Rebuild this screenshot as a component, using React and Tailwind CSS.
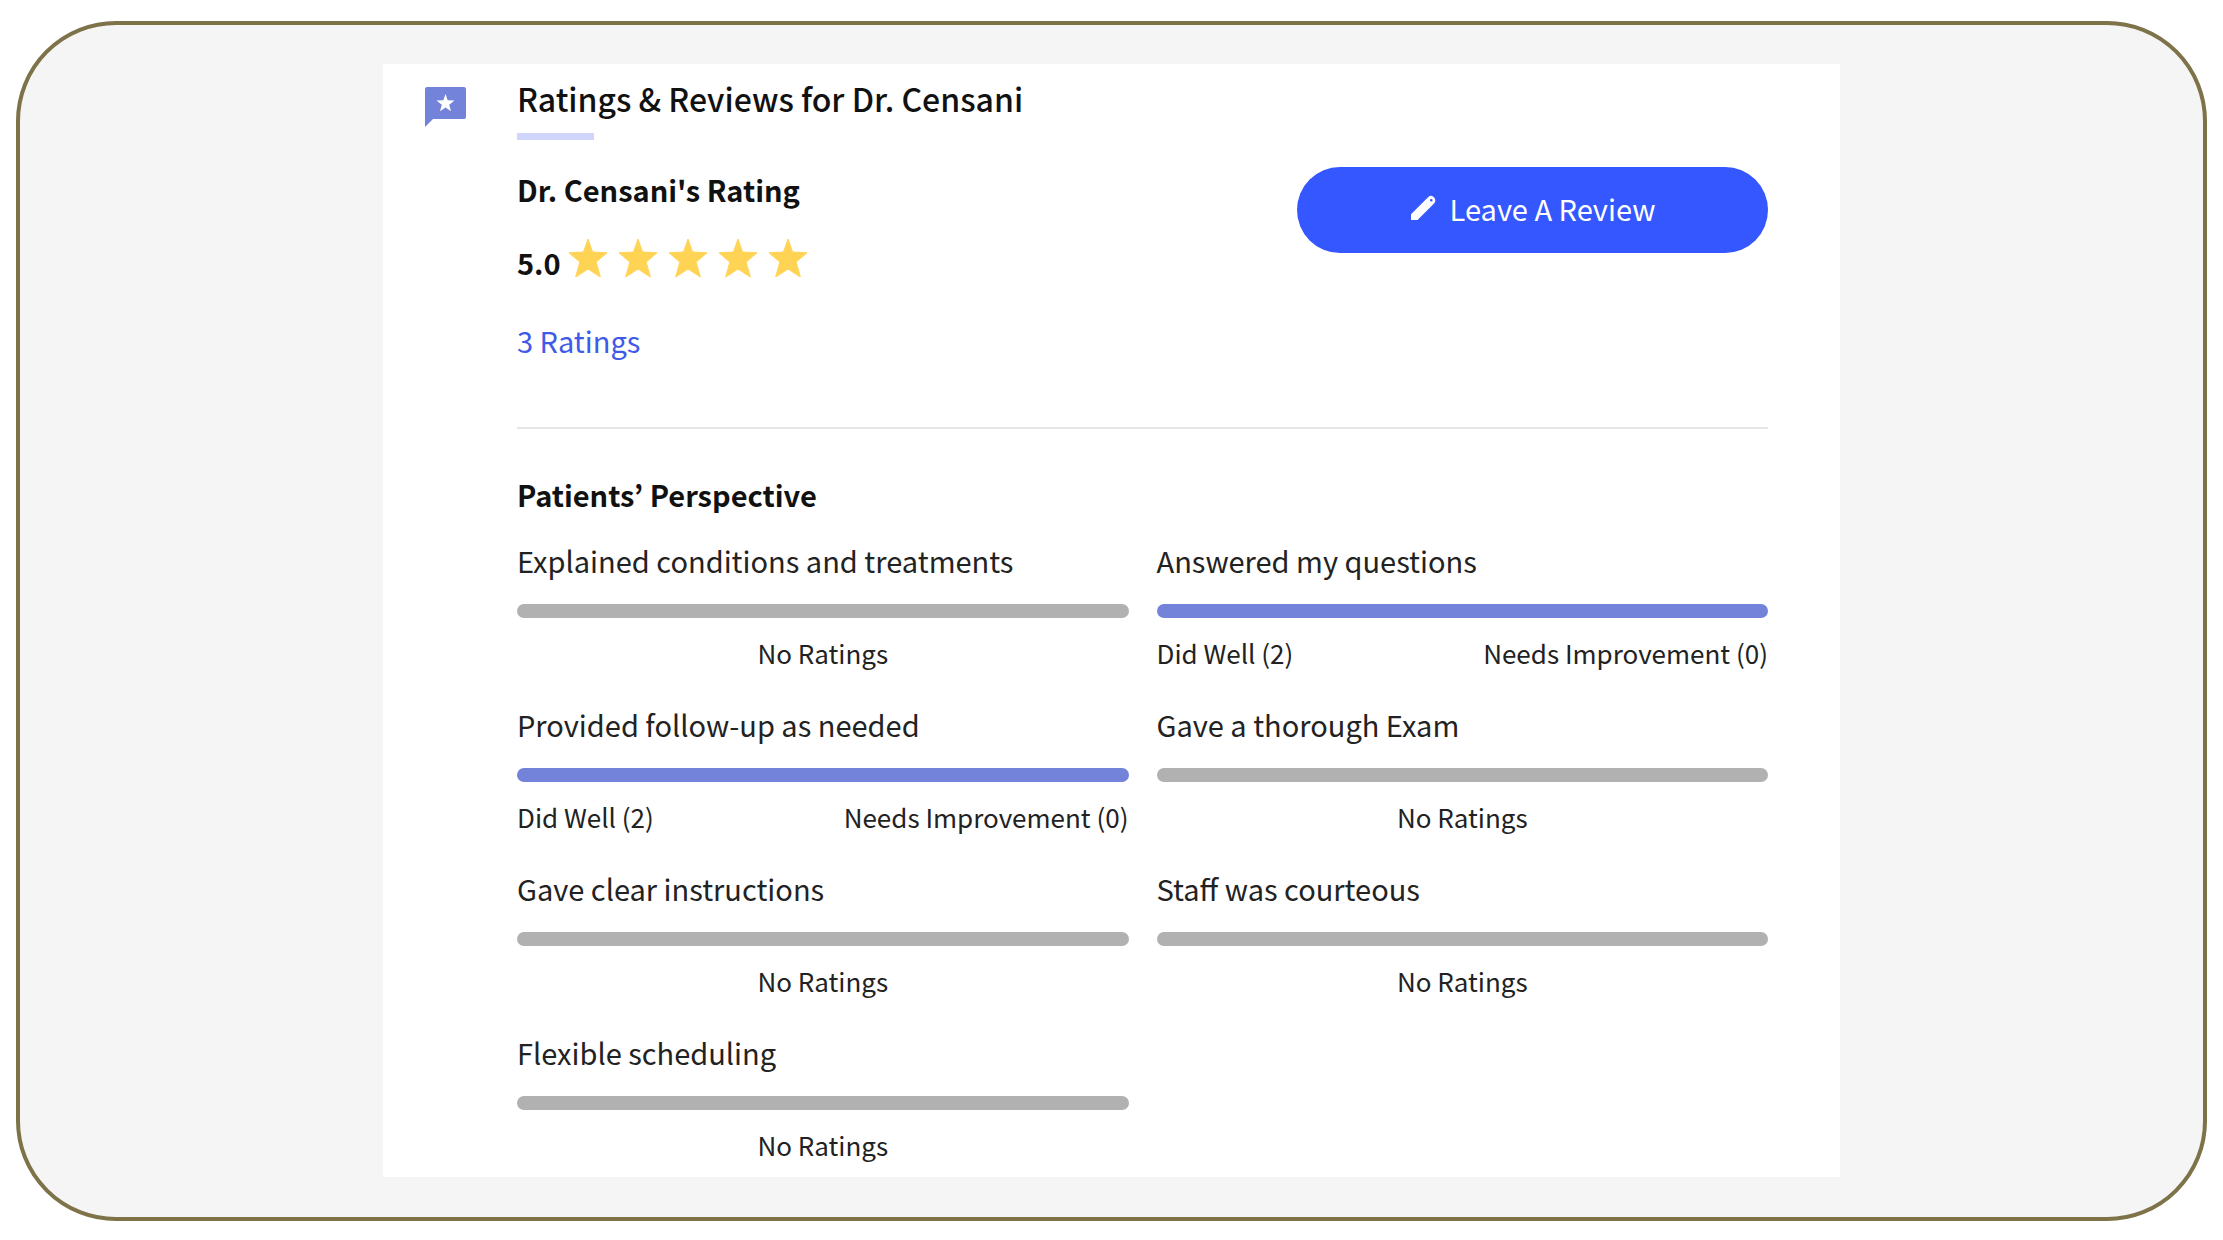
const aspects = [
  { label: 'Explained conditions and treatments' },
  { label: 'Answered my questions', well: 2, improve: 0 },
  { label: 'Provided follow-up as needed', well: 2, improve: 0 },
  { label: 'Gave a thorough Exam' },
  { label: 'Gave clear instructions' },
  { label: 'Staff was courteous' },
  { label: 'Flexible scheduling' },
];

function ReviewIcon() {
  return (
    <svg viewBox="0 0 41 40" className="mt-[23px] h-10 w-[41px] shrink-0" aria-hidden="true">
      <path fill="#7283d9" d="M2 0H39Q41 0 41 2V30Q41 32 39 32H8L0 40V2Q0 0 2 0Z" />
      <path
        fill="#fff"
        d="M20.500 7L22.700 13.200L29.500 13.500L24.200 17.700L26 24.300L20.500 20.600L15 24.300L16.800 17.700L11.500 13.500L18.300 13.200Z"
      />
    </svg>
  );
}

function Star() {
  return (
    <svg viewBox="0 0 40 40" className="h-10 w-10" aria-hidden="true">
      <path
        fill="#ffd455"
        stroke="#ffd455"
        strokeLinejoin="round"
        d="M20 1L24.500 14L39 14.800L28.200 24L32.300 39L20 31L7.700 39L11.800 24L1 14.800L15.500 14Z"
      />
    </svg>
  );
}

function Pencil() {
  return (
    <svg viewBox="0 0 26 26" className="size-[26px]" aria-hidden="true">
      <path
        fill="#fff"
        fillRule="evenodd"
        d="M1 25V19.300L18.300 2Q21 -0.300 23.500 2L24.300 2.800Q26.300 5.500 24.300 8.200L7.500 25ZM21.300 4A1.300 1.300 0 1 0 21.300 6.600A1.300 1.300 0 1 0 21.300 4Z"
      />
    </svg>
  );
}

function Aspect({ label, well, improve }) {
  const rated = well !== undefined;

  return (
    <div>
      <h4 className="text-[29px] leading-[44px] text-[#222]">{label}</h4>
      <div className={rated ? 'mt-[22px] h-3.5 rounded-full bg-[#7283d9]' : 'mt-[22px] h-3.5 rounded-full bg-[#b1b1b1]'} />
      {rated ? (
        <div className="mt-[15px] flex justify-between text-[26px] leading-[40px] text-[#222]">
          <span>Did Well ({well})</span>
          <span>Needs Improvement ({improve})</span>
        </div>
      ) : (
        <p className="mt-[15px] text-center text-[26px] leading-[40px] text-[#222]">No Ratings</p>
      )}
    </div>
  );
}

export default function App() {
  return (
    <div className="bg-white px-4 py-[21px] font-['Noto_Sans_CJK_KR','Noto_Sans',sans-serif]">
      <main className="rounded-[100px] border-4 border-[#7e7249] bg-[#f5f5f5] pt-[39px] pb-10">
        <section className="mx-auto flex w-full max-w-[1457px] gap-[51px] bg-white pr-[72px] pb-3 pl-[42px]">
          <ReviewIcon />
          <div className="flex-1">
            <h2 className="pt-3 text-[32px] leading-[44px] font-medium text-[#111]">
              Ratings &amp; Reviews for Dr. Censani
            </h2>
            <div className="mt-[13px] h-[7px] w-[77px] bg-[#d0d6fb]" />

            <div className="mt-[27px] flex items-start justify-between">
              <div>
                <h3 className="text-[29px] leading-[44px] font-bold text-[#111]">Dr. Censani's Rating</h3>
                <div className="mt-[27px] flex items-start gap-[7px]">
                  <span className="pt-1 text-[29px] leading-[40px] font-bold text-[#111]">5.0</span>
                  <div className="flex gap-2.5">
                    {[1, 2, 3, 4, 5].map((n) => (
                      <Star key={n} />
                    ))}
                  </div>
                </div>
                <a href="#ratings" className="mt-9 block text-[29px] leading-[44px] text-[#3f5ae8]">
                  3 Ratings
                </a>
              </div>
              <button
                type="button"
                className="flex h-[86px] w-[471px] items-center justify-center gap-3.5 rounded-full bg-[#3457ff] pb-1 text-[29px] leading-[44px] text-white"
              >
                <Pencil />
                Leave A Review
              </button>
            </div>

            <hr className="mt-[65px] border-t-2 border-[#e6e6e6]" />

            <h3 className="mt-[43px] text-[29px] leading-[44px] font-bold text-[#111]">Patients’ Perspective</h3>
            <div id="ratings" className="mt-[22px] grid grid-cols-2 gap-x-7 gap-y-[29px]">
              {aspects.map((a) => (
                <Aspect key={a.label} {...a} />
              ))}
            </div>
          </div>
        </section>
      </main>
    </div>
  );
}
